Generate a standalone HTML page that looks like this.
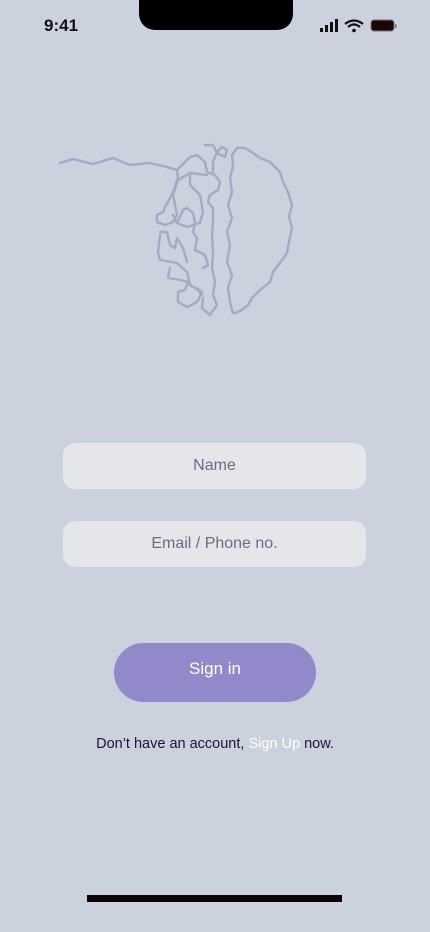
<!DOCTYPE html>
<html><head><style>
body{margin:0;width:430px;height:932px;background:#cbd1dd;font-family:"Liberation Sans",sans-serif;position:relative;overflow:hidden}
.notch{position:absolute;left:139px;top:0;width:154px;height:30px;background:#000;border-radius:0 0 16px 16px}
.time{position:absolute;left:44px;top:16px;font-size:17px;font-weight:bold;color:#111}
.in{position:absolute;left:63px;width:303px;height:46px;background:#e4e6ea;border-radius:12px;color:#6e6a80;font-size:16px;text-align:center;line-height:46px}
.btn{position:absolute;left:114px;top:643px;width:202px;height:59px;background:#9189c9;border-radius:30px;color:#fff;font-size:17px;text-align:center;line-height:51px}
.txt{position:absolute;top:736px;width:430px;text-align:center;font-size:14.5px;color:#1e1530}
.bar{position:absolute;left:87px;top:895px;width:255px;height:7px;background:#0a0006}
</style></head><body>
<div class="notch"></div>
<div class="time">9:41</div>
<svg style="position:absolute;left:318px;top:18px" width="80" height="16">
<rect x="2" y="10" width="3" height="4" fill="#111"/><rect x="7" y="7" width="3" height="7" fill="#111"/><rect x="12" y="4" width="3" height="10" fill="#111"/><rect x="17" y="1" width="3" height="13" fill="#111"/>
<path d="M27 6 Q36 -1 45 6" stroke="#111" stroke-width="2.2" fill="none"/><path d="M30 9 Q36 4 42 9" stroke="#111" stroke-width="2.2" fill="none"/><circle cx="36" cy="12.5" r="1.8" fill="#111"/>
<rect x="53" y="2" width="23" height="11" rx="3" fill="#1a0508" stroke="#777" stroke-width="1"/><rect x="77" y="6" width="1.5" height="4" fill="#777"/>
</svg>
<svg style="position:absolute;left:0;top:0" width="430" height="340" fill="none" stroke="#a3abc3" stroke-width="2.4" stroke-linecap="round" stroke-linejoin="round">
<polyline points="60,163 73,159 93,164 113,158 130,165 150,163 167,167 177,170 190,157 197,155 205,162 207,172 215,175 220,182 218,190 210,195 208,202 213,208 213,222 212,235 213,252 212,268 215,282 213,295 217,305 210,315 202,308 203,298"/>
<polyline points="205,145 213,145 217,153 225,157 227,150 222,147 217,152 213,162 213,172"/>
<polyline points="177,170 178,178 173,192 168,202 165,207 163,212 157,215 157,222 165,225 173,222 177,215 173,195 178,180 190,173 207,175"/>
<polyline points="190,175 190,185 200,195 203,212 200,223 187,227 177,223 173,215"/>
<polyline points="177,223 183,210 187,208 193,213 195,223 193,232 197,238 195,250 205,255 208,265 203,268"/>
<polyline points="160,232 167,232 170,245 175,248 177,238 183,248 187,262"/>
<polyline points="160,235 158,252 160,260 177,263 187,272 190,285 198,290 202,295"/>
<polyline points="170,268 168,278 180,280 188,282 185,290 178,292 178,302 187,307 197,302 202,292 197,288"/>
<polyline points="233,313 230,302 228,288 232,275 227,262 230,245 227,232 232,218 228,205 232,192 230,178 233,167 232,155 237,148 245,148 253,153 260,158 270,162 280,172 283,182 288,192 292,205 289,217 292,228 289,242 287,253 280,263 273,272 270,282 260,290 252,298 248,305 242,310 235,313"/>
</svg>
<div class="in" style="top:443px">Name</div>
<div class="in" style="top:521px">Email / Phone no.</div>
<div class="btn">Sign in</div>
<div class="txt">Don’t have an account, <span style="color:#fff">Sign Up</span> now.</div>
<div class="bar"></div>
</body></html>
